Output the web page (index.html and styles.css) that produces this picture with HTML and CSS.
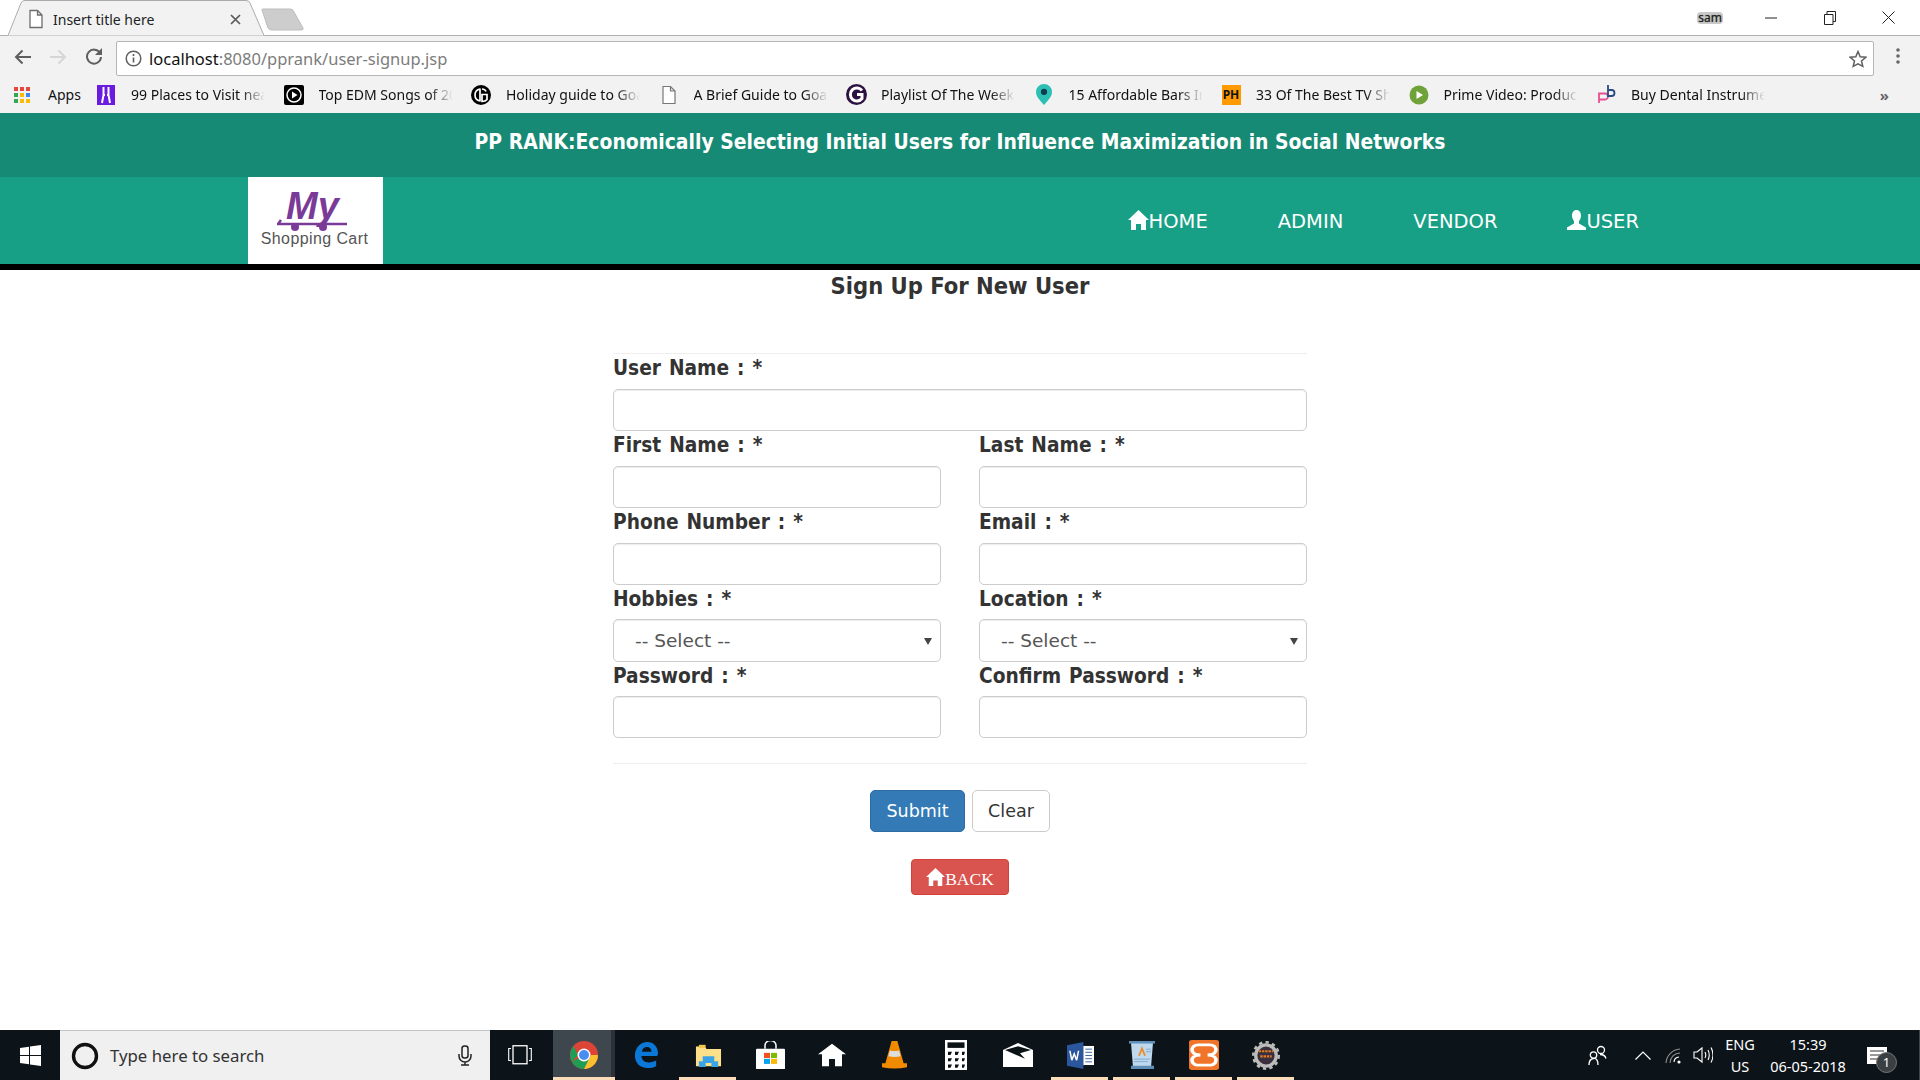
FILE: index.html
```html
<!DOCTYPE html>
<html lang="en">
<head>
<meta charset="utf-8">
<title>Insert title here</title>
<link rel="stylesheet" href="styles.css">
</head>
<body>
<div class="tabstrip">
  <svg class="tabshape" width="320" height="36" viewBox="0 0 320 36"><path d="M8 35.5 L21 3 Q22 .5 25 .5 L246 .5 Q249 .5 250 3 L264 35.5" fill="#f2f2f2" stroke="#ababab"/><path d="M262 10 Q261 9 264 9 L290 9 Q293 9 294 12 L303 28 Q304 30 301 30 L272 30 Q269 30 268 28 Z" fill="#cdcdcd" stroke="#bdbdbd"/></svg>
  <div class="tab">
    <svg width="16" height="20" viewBox="0 0 16 20"><path d="M2 1.5h7.5l4.5 4.5v12.5h-12z M9.500 1.500v4.500h4.500" fill="#fff" stroke="#6e6e6e" stroke-width="1.300"/></svg>
    <span class="tab-title">Insert title here</span>
    <svg class="tab-close" width="11" height="11" viewBox="0 0 11 11"><path d="M1 1l9 9M10 1l-9 9" stroke="#5a5a5a" stroke-width="1.700"/></svg>
  </div>
  <div class="winctl">
    <span class="profile">sam</span>
    <svg class="w-min" width="12" height="2" viewBox="0 0 12 2"><path d="M0 1h12" stroke="#222" stroke-width="1"/></svg>
    <svg class="w-res" width="12" height="14" viewBox="0 0 12 14"><path d="M.5 3.500h8.500v10h-8.500zM3 3.500v-3h8.500v10h-2.500" fill="none" stroke="#222"/></svg>
    <svg class="w-cls" width="13" height="13" viewBox="0 0 13 13"><path d="M.5.500l12 12M12.500.500l-12 12" stroke="#222"/></svg>
  </div>
</div>
<div class="toolbar">
  <svg class="t-back" width="18" height="16" viewBox="0 0 18 16"><path d="M17 8H2M8.500 1.500L2 8l6.500 6.500" fill="none" stroke="#5f5f5f" stroke-width="2"/></svg>
  <svg class="t-fwd" width="18" height="16" viewBox="0 0 18 16"><path d="M1 8h15M9.500 1.500L16 8l-6.500 6.500" fill="none" stroke="#d6d6d6" stroke-width="2"/></svg>
  <svg class="t-rel" width="18" height="18" viewBox="0 0 18 18"><path d="M15 6A7 7 0 1 0 16 10" fill="none" stroke="#5f5f5f" stroke-width="2"/><path d="M17 1v7h-7z" fill="#5f5f5f"/></svg>
  <div class="omnibox">
    <svg width="17" height="17" viewBox="0 0 17 17"><circle cx="8.500" cy="8.500" r="7.300" fill="none" stroke="#5f5f5f" stroke-width="1.500"/><path d="M8.500 7.500v5M8.500 4v2" stroke="#5f5f5f" stroke-width="1.600"/></svg>
    <span class="url"><span class="url-host">localhost</span>:8080/pprank/user-signup.jsp</span>
    <svg class="star" width="18" height="18" viewBox="0 0 18 18"><path d="M9 1.500l2.200 5.200 5.600.5-4.300 3.700 1.300 5.500L9 13.900l-4.800 2.500 1.300-5.500L1.200 7.200l5.600-.5z" fill="none" stroke="#5f5f5f" stroke-width="1.500"/></svg>
  </div>
  <svg class="t-menu" width="4" height="18" viewBox="0 0 4 18"><circle cx="2" cy="3" r="1.800" fill="#666"/><circle cx="2" cy="9" r="1.800" fill="#666"/><circle cx="2" cy="15" r="1.800" fill="#666"/></svg>
</div>
<div class="bookmarks">
  <div class="bm bm-apps">
    <svg width="17" height="16" viewBox="0 0 17 16"><g><rect width="4" height="4" fill="#e8453c"/><rect x="6" width="4" height="4" fill="#e8453c"/><rect x="12" width="4" height="4" fill="#e8453c"/><rect y="6" width="4" height="4" fill="#34a853"/><rect x="6" y="6" width="4" height="4" fill="#fbbc05"/><rect x="12" y="6" width="4" height="4" fill="#4285f4"/><rect y="12" width="4" height="4" fill="#34a853"/><rect x="6" y="12" width="4" height="4" fill="#fbbc05"/><rect x="12" y="12" width="4" height="4" fill="#fbbc05"/></g></svg>
    <span class="bm-apps-text">Apps</span>
  </div>
  <div class="bm">
    <span class="bm-ico"><svg width="18" height="20" viewBox="0 0 18 20"><rect width="18" height="20" fill="#6a1be0"/><path d="M6.500 2v8l-1.500 8M11.500 2v8l1.500 8M6.500 10h1.500M10 10h1.500" stroke="#fff" stroke-width="2" fill="none"/></svg></span>
    <span class="bm-text">99 Places to Visit near</span>
  </div>
  <div class="bm">
    <span class="bm-ico"><svg width="20" height="20" viewBox="0 0 20 20"><rect width="20" height="20" rx="2" fill="#000"/><circle cx="10" cy="10" r="7" fill="none" stroke="#fff" stroke-width="1.500"/><path d="M8 6.500v7l5.500-3.500z" fill="#fff"/></svg></span>
    <span class="bm-text">Top EDM Songs of 2018</span>
  </div>
  <div class="bm">
    <span class="bm-ico"><svg width="20" height="20" viewBox="0 0 20 20"><circle cx="10" cy="10" r="10" fill="#000"/><path d="M9 3.500v13M9 4Q4 5 4 10t5 6M11 4q3 0 4 2.500M11 9.500h5v5q-1.500 2-5 2z" fill="none" stroke="#fff" stroke-width="1.700"/></svg></span>
    <span class="bm-text">Holiday guide to Goa</span>
  </div>
  <div class="bm">
    <span class="bm-ico"><svg width="14" height="20" viewBox="0 0 14 20"><path d="M1 1.500h7.500l4.500 4.500v12.500h-12z M8.500 1.500v4.500h4.500" fill="#fff" stroke="#777" stroke-width="1.200"/></svg></span>
    <span class="bm-text">A Brief Guide to Goa</span>
  </div>
  <div class="bm">
    <span class="bm-ico"><svg width="21" height="21" viewBox="0 0 21 21"><circle cx="10.500" cy="10.500" r="10.500" fill="#2d1140"/><path d="M16 6.500A6.500 6.500 0 1 0 16 14.500V10.500H11" fill="none" stroke="#fff" stroke-width="3"/></svg></span>
    <span class="bm-text">Playlist Of The Week</span>
  </div>
  <div class="bm">
    <span class="bm-ico"><svg width="16" height="21" viewBox="0 0 18 24" preserveAspectRatio="none"><path d="M9 24C4 18 0 14 0 9a9 9 0 0 1 18 0c0 5-4 9-9 15z" fill="#2cbfb4"/><circle cx="9" cy="9" r="3.500" fill="#0d3f4f"/></svg></span>
    <span class="bm-text">15 Affordable Bars In</span>
  </div>
  <div class="bm">
    <span class="bm-ico"><span class="ph">PH</span></span>
    <span class="bm-text">33 Of The Best TV Shows</span>
  </div>
  <div class="bm">
    <span class="bm-ico"><svg width="20" height="20" viewBox="0 0 20 20"><circle cx="10" cy="10" r="9.500" fill="#6fa339"/><path d="M7.500 6v8l6.500-4z" fill="#fff"/></svg></span>
    <span class="bm-text">Prime Video: Products</span>
  </div>
  <div class="bm">
    <span class="bm-ico"><svg width="19" height="22" viewBox="0 0 19 22"><path d="M2 19V9.500h6a3 3 0 0 1 0 6H2" fill="none" stroke="#e84f92" stroke-width="1.800"/><path d="M11 1v11h3.500a2.800 2.800 0 0 0 0-6H11" fill="none" stroke="#274b82" stroke-width="1.800"/></svg></span>
    <span class="bm-text">Buy Dental Instruments</span>
  </div>
  <span class="bm-more">»</span>
</div>

<header class="site-title">PP RANK:Economically Selecting Initial Users for Influence Maximization in Social Networks</header>
<nav class="navbar">
  <div class="logo">
    <span class="logo-my">My</span>
    <svg class="logo-cart" width="72" height="14" viewBox="0 0 72 14"><path d="M4 1 L1 5 H70" fill="none" stroke="#7a3a98" stroke-width="2.500"/><circle cx="18" cy="8" r="4" fill="#7a3a98"/><circle cx="46" cy="8" r="4" fill="#7a3a98"/></svg>
    <span class="logo-name">Shopping Cart</span>
  </div>
  <ul class="nav-links">
    <li><svg class="ico-home" width="21" height="20" viewBox="0 0 21 20"><path d="M10.500 0L21 10h-3v10h-5v-6H8v6H3V10H0z" fill="#fff"/></svg>HOME</li>
    <li>ADMIN</li>
    <li>VENDOR</li>
    <li><svg class="ico-user" width="19" height="20" viewBox="0 0 19 20"><path d="M9.500 0c3 0 4.500 2.500 4.500 5.500 0 2.500-1 4.500-2 5.500v2.500l7 4V20H0v-2.500l7-4V11C6 10 5 8 5 5.500 5 2.500 6.500 0 9.500 0z" fill="#fff"/></svg>USER</li>
  </ul>
</nav>

<main class="page">
  <h1 class="page-title">Sign Up For New User</h1>
  <form class="signup">
    <div class="rule rule-top"></div>
    <div class="grid">
      <div class="field wide"><label>User Name : *</label><input type="text"></div>
      <div class="field"><label>First Name : *</label><input type="text"></div>
      <div class="field"><label>Last Name : *</label><input type="text"></div>
      <div class="field"><label>Phone Number : *</label><input type="text"></div>
      <div class="field"><label>Email : *</label><input type="text"></div>
      <div class="field"><label>Hobbies : *</label><div class="select"><select><option>-- Select --</option></select></div></div>
      <div class="field"><label>Location : *</label><div class="select"><select><option>-- Select --</option></select></div></div>
      <div class="field"><label>Password : *</label><input type="password"></div>
      <div class="field"><label>Confirm Password : *</label><input type="password"></div>
    </div>
    <div class="rule rule-bottom"></div>
    <div class="actions">
      <button type="button" class="btn btn-primary">Submit</button>
      <button type="button" class="btn btn-default">Clear</button>
    </div>
    <div class="back-row">
      <a class="btn-back"><svg width="19" height="18" viewBox="0 0 21 20"><path d="M10.500 0L21 10h-3v10h-5v-6H8v6H3V10H0z" fill="#fff"/></svg>BACK</a>
    </div>
  </form>
</main>

<footer class="taskbar">
  <div class="start"><svg width="21" height="21" viewBox="0 0 21 21"><path d="M0 3l9-1.300V10H0zM10 1.500L21 0v10H10zM0 11h9v8.300L0 18zM10 11h11v10l-11-1.500z" fill="#fff"/></svg></div>
  <div class="search">
    <svg width="28" height="28" viewBox="0 0 28 28"><circle cx="14" cy="14" r="11.500" fill="none" stroke="#111" stroke-width="3.400"/></svg>
    <span class="search-text">Type here to search</span>
    <svg class="mic" width="16" height="21" viewBox="0 0 16 21"><rect x="5" y="1" width="6" height="12" rx="2.500" fill="none" stroke="#222" stroke-width="1.500"/><path d="M2 9v2a6 6 0 0 0 12 0V9M8 17v3M4 20h8" fill="none" stroke="#222" stroke-width="1.500"/></svg>
  </div>
  <div class="slot slot-view"><svg width="24" height="20" viewBox="0 0 24 20"><rect x="5" y=".75" width="14" height="18" fill="none" stroke="#fff" stroke-width="1.300"/><path d="M3 3.500H.7v12H3M21 3.500h2.300v12H21" fill="none" stroke="#fff" stroke-width="1.100"/></svg></div>
  <div class="slot slot-chrome"><svg width="28" height="28" viewBox="0 0 28 28"><circle cx="14" cy="14" r="14" fill="#dc4437"/><path d="M14 14L1.900 21A14 14 0 0 0 14 28l7-10z" fill="#1f9d55"/><path d="M14 14h14a14 14 0 0 1-14 14l7-14z" fill="#fbc02d"/><path d="M2 21A14 14 0 0 1 3.500 5L8 14z" fill="#1f9d55"/><circle cx="14" cy="14" r="6.500" fill="#fff"/><circle cx="14" cy="14" r="5" fill="#4a8df0"/></svg></div>
  <div class="slot"><svg width="24" height="26" viewBox="0 0 26 28" preserveAspectRatio="none"><path d="M25 15H8c.3 4 3.300 7 8 7 3 0 6-.8 8-2v6c-2.500 1.300-5.500 2-9 2C6 28 1 22 1 14.500 1 6.500 6.800 0 14.500 0 21 0 26 5 26 12.500c0 1-.3 1.800-1 2.500zM8.500 10.500H19C19 7.500 17 5.500 14 5.500s-5 2-5.500 5z" fill="#0b78d7"/></svg></div>
  <div class="slot on"><svg width="27" height="23" viewBox="0 0 28 28" preserveAspectRatio="none"><path d="M1 3h9l2 3h15v21H1z" fill="#ffe08a"/><path d="M4 1h7v4H4z" fill="#f2c94c"/><path d="M8 15h12v6h4v7h-7v-5h-6v5H4v-7h4z" fill="#3ba4e6"/></svg></div>
  <div class="slot"><svg width="29" height="28" viewBox="0 0 29 33" preserveAspectRatio="none"><path d="M9 9V5a5.500 5.500 0 0 1 11 0v4" fill="none" stroke="#fff" stroke-width="1.500"/><rect y="9" width="29" height="24" rx="1" fill="#fff"/><rect x="8" y="14" width="6" height="6" fill="#f25022"/><rect x="15" y="14" width="6" height="6" fill="#7fba00"/><rect x="8" y="21" width="6" height="6" fill="#00a4ef"/><rect x="15" y="21" width="6" height="6" fill="#ffb900"/></svg></div>
  <div class="slot"><svg width="28" height="24" viewBox="0 0 28 30" preserveAspectRatio="none"><path d="M14 1L28 14h-4v15h-7v-9h-6v9H4V14H0z" fill="#fff"/></svg></div>
  <div class="slot"><svg width="25" height="28" viewBox="0 0 26 34" preserveAspectRatio="none"><path d="M10 0h6l6.500 27H26v5q-13 3-26 0v-5h3.500z" fill="#f28a00"/><path d="M8.200 11.500q5 1.500 9.600 0l1.500 7q-6 2-12.600 0z" fill="#ddd"/></svg></div>
  <div class="slot"><svg width="22" height="30" viewBox="0 0 22 38" preserveAspectRatio="none"><rect width="22" height="38" fill="#fff"/><rect x="2.500" y="3" width="17" height="7" fill="#0b1216"/><g fill="#0b1216"><path d="M3 15h4l-1.500 4H3zM10 15h4l-1.500 4H10zM17 15h3l-1 4h-2zM3 23h4l-1.500 4H3zM10 23h4l-1.500 4H10zM17 23h3l-1 4h-2zM3 31h4l-1.500 4H3zM10 31h4l-1.500 4H10zM17 31h3l-1 4h-2z"/></g></svg></div>
  <div class="slot"><svg width="30" height="24" viewBox="0 0 30 29" preserveAspectRatio="none"><path d="M15 0L30 8.500V29H0V8.500z" fill="#fff"/><path d="M2 8.500L15 4l13 4.500-11 4 5 6.500L2 8.500z" fill="#0b1216"/></svg></div>
  <div class="slot on"><svg width="27" height="27" viewBox="0 0 28 34" preserveAspectRatio="none"><path d="M0 4L17 0v34L0 30z" fill="#2a569d"/><rect x="17" y="5" width="11" height="24" fill="#fff"/><path d="M19 9h7M19 13h7M19 17h7M19 21h7M19 25h7" stroke="#2a569d"/><path d="M3 11l2 12 2.500-8 2.500 8 2-12" fill="none" stroke="#fff" stroke-width="1.600"/></svg></div>
  <div class="slot on"><svg width="26" height="28" viewBox="0 0 26 34" preserveAspectRatio="none"><path d="M2 2h22l-2 30H4z" fill="#bed8ee"/><path d="M0 0h26v3H0zM2 30h23v4H2z" fill="#5f8fb8"/><path d="M10 18l3-9 3 9" fill="none" stroke="#f08a24" stroke-width="1.800"/><path d="M17 10h5M17 13h5M5 22h16M5 25h14" stroke="#7ea8d0"/></svg></div>
  <div class="slot on"><svg width="30" height="30" viewBox="0 0 30 37" preserveAspectRatio="none"><rect width="30" height="37" rx="3" fill="#f0752a"/><path d="M9 6h12a5 5 0 0 1 0 12l-2 .5 2 .5a5.500 5.500 0 0 1 0 12H9a5.500 5.500 0 0 1 0-12l2-.5-2-.5a5 5 0 0 1 0-12z" fill="none" stroke="#fff" stroke-width="3.600"/></svg></div>
  <div class="slot on"><svg width="28" height="29" viewBox="0 0 34 34" preserveAspectRatio="none"><circle cx="17" cy="17" r="12.500" fill="#3a2f3f" stroke="#bcbcbc" stroke-width="4"/><circle cx="17" cy="17" r="15.500" fill="none" stroke="#bcbcbc" stroke-width="3" stroke-dasharray="4 4"/><path d="M8 12h18M10 18h14" stroke="#e07b20" stroke-width="2.500" stroke-dasharray="3 1"/></svg></div>
  <div class="tray">
    <svg class="tr-people" width="19" height="21" viewBox="0 0 19 21"><circle cx="13" cy="5" r="3.500" fill="none" stroke="#fff" stroke-width="1.300"/><circle cx="5.500" cy="10" r="3.200" fill="none" stroke="#fff" stroke-width="1.300"/><path d="M1 20q0-6 4.500-6.500T10 20M12 9.500q5 0 6 4" fill="none" stroke="#fff" stroke-width="1.300"/></svg>
    <svg class="tr-chev" width="16" height="9" viewBox="0 0 16 9"><path d="M.5 8.500L8 1l7.500 7.500" fill="none" stroke="#fff" stroke-width="1.200"/></svg>
    <svg class="tr-wifi" width="17" height="17" viewBox="0 0 17 17"><path d="M1 16A15 15 0 0 1 15 2M5 16A10 10 0 0 1 15 6" fill="none" stroke="#8d8d8d" stroke-width="1.100"/><path d="M9 15A5.500 5.500 0 0 1 14 10" fill="none" stroke="#fff" stroke-width="1.200"/><circle cx="14" cy="15" r="1.600" fill="#fff"/></svg>
    <svg class="tr-vol" width="20" height="18" viewBox="0 0 20 18"><path d="M1 6h3l5-4v14l-5-4H1z M12 6q1.500 3 0 6M15 4q2.500 5 0 10M18 1.500q4 7.500 0 15" fill="none" stroke="#fff" stroke-width="1.100"/></svg>
    <div class="lang"><span>ENG</span><span>US</span></div>
    <div class="clock"><span>15:39</span><span>06-05-2018</span></div>
    <div class="notif">
      <svg width="20" height="17" viewBox="0 0 20 17"><rect width="20" height="17" fill="#fff"/><path d="M3 4h14M3 8h14M3 12h14" stroke="#333" stroke-width="1.100"/></svg>
      <span class="notif-badge">1</span>
    </div>
  </div>
</footer>
</body>
</html>
```

FILE: styles.css
```css
* { box-sizing: border-box; }
html, body { margin: 0; height: 100%; }
body {
  width: 1920px; height: 1080px; overflow: hidden;
  display: flex; flex-direction: column;
  background: #fff; color: #333;
  font-family: "DejaVu Sans", sans-serif;
}
svg { flex: none; display: block; }

/* browser chrome */
.tabstrip {
  position: relative; height: 36px; flex: none; background: #fff;
  border-bottom: 1px solid #b0b0b0; display: flex; align-items: flex-start;
  font-family: "Noto Sans", sans-serif;
}
.tabshape { position: absolute; left: 0; top: 0; }
.tab { position: relative; width: 250px; padding: 9px 0 0 28px; display: flex; align-items: center; align-self: flex-start; height: 29px; }
.tab-title { margin-left: 9px; font-size: 14px; color: #222; white-space: nowrap; }
.tab-close { margin-left: 76px; }
.winctl { margin-left: auto; display: flex; align-items: center; height: 35px; padding-right: 25px; }
.profile { font-size: 12px; color: #222; background: #c9c9c9; border-radius: 4px; padding: 0 1px; line-height: 12px; margin-right: 42px; text-shadow: 0 0 1px #555; }
.w-min { margin-right: 47px; }
.w-res { margin-right: 46px; }

.toolbar { height: 40px; flex: none; background: #f2f2f2; display: flex; align-items: center; padding: 0 20px 0 14px; font-family: "Noto Sans", sans-serif; }
.t-back { margin-right: 17px; margin-top: 2px; }
.t-fwd { margin-right: 18px; margin-top: 2px; }
.t-rel { margin-right: 13px; }
.omnibox { width: 1759px; height: 35px; margin-top: 5px; background: #fff; border: 1px solid #b5b5b5; border-radius: 2px; display: flex; align-items: center; padding: 0 6px 0 8px; }
.url { margin-left: 7px; font-size: 16.5px; color: #7c7c7c; white-space: nowrap; }
.url-host { color: #111; }
.star { margin-left: auto; }
.t-menu { margin-left: 22px; }

.bookmarks { height: 37px; flex: none; background: #f2f2f2; display: flex; align-items: center; padding-left: 14px; font-family: "Noto Sans", sans-serif; font-size: 14px; color: #111; }
.bm { display: flex; align-items: center; width: 187.500px; flex: none; }
.bm-apps { width: 82px; }
.bm-apps-text { margin-left: 17px; }
.bm-ico { width: 20px; flex: none; display: flex; justify-content: center; }
.bm-text { margin-left: 15px; width: 134px; overflow: hidden; white-space: nowrap; -webkit-mask-image: linear-gradient(90deg, #000 82%, transparent 100%); mask-image: linear-gradient(90deg, #000 82%, transparent 100%); }
.ph { width: 19px; height: 20px; background: #ff9a00; color: #111; font-size: 12px; font-weight: 700; line-height: 20px; text-align: center; flex: none; }
.bm-more { margin-left: auto; padding-right: 31px; font-size: 15px; font-weight: 700; color: #666; }

/* site header */
.site-title { height: 64px; flex: none; background: #168a74; color: #fff; text-align: center; font-family: "DejaVu Sans Condensed", "DejaVu Sans", sans-serif; font-weight: 700; font-size: 20.900px; line-height: 58px; white-space: nowrap; }
.navbar { height: 93px; flex: none; background: #17a085; border-bottom: 6px solid #000; display: flex; justify-content: space-between; padding: 0 246px 0 248px; color: #fff; }
.logo { width: 135px; height: 87px; background: #fff; display: flex; flex-direction: column; align-items: center; padding-top: 12px; }
.logo-my { font-family: "Liberation Sans", sans-serif; font-style: italic; font-weight: 700; font-size: 38px; line-height: 34px; letter-spacing: 0; color: #7a3a98; margin-left: -6px; }
.logo-cart { margin: -4px 0 0 -5px; }
.logo-name { font-family: "Liberation Sans", sans-serif; font-size: 16px; line-height: 16px; color: #555; letter-spacing: .4px; margin: -2px 0 0 -2px; }
.nav-links { list-style: none; margin: 0; padding: 0; display: flex; align-items: center; font-size: 19.500px; }
.nav-links li { display: flex; align-items: center; padding: 2px 35px 0; }
.nav-links svg { margin-top: -3px; }

/* form */
.page { flex: 1; display: flex; flex-direction: column; align-items: center; min-height: 0; }
.page-title { margin: 0; font-family: "DejaVu Sans Condensed", "DejaVu Sans", sans-serif; font-size: 23.500px; font-weight: 700; line-height: 32px; color: #333; height: 83px; }
.signup { width: 694px; }
.rule { height: 1px; background: #eee; }
.grid { display: grid; grid-template-columns: 1fr 1fr; column-gap: 38px; }
.wide { grid-column: 1 / -1; }
.field { display: flex; flex-direction: column; height: 76.900px; }
.field label { font-family: "DejaVu Sans Condensed", "DejaVu Sans", sans-serif; font-weight: 700; font-size: 20.700px; word-spacing: 1.500px; line-height: 25px; height: 34.900px; padding-top: 2px; color: #333; }
.field input, .field select {
  width: 100%; height: 42px; background: #fff; border: 1px solid #ccc; border-radius: 5px;
  box-shadow: inset 0 1px 1px rgba(0,0,0,.075); padding: 0 21px; margin: 0;
  font-family: "DejaVu Sans", sans-serif; font-size: 18.500px; color: #555; outline: 0;
}
.select { position: relative; }
.select select { appearance: none; -webkit-appearance: none; height: 43px; }
.select::after { content: ""; position: absolute; right: 9px; top: 19px; border: 4px solid transparent; border-top: 7px solid #444; border-bottom: 0; }
.rule-bottom { margin-top: 25px; }
.actions { display: flex; justify-content: center; gap: 7px; margin-top: 26px; }
.btn { height: 42px; border-radius: 5px; font-family: "DejaVu Sans", sans-serif; font-size: 17.500px; padding: 0; cursor: pointer; }
.btn-primary { width: 95px; background: #337ab7; border: 1px solid #2e6da4; color: #fff; }
.btn-default { width: 78px; background: #fff; border: 1px solid #ccc; color: #333; }
.back-row { display: flex; justify-content: center; margin-top: 27px; }
.btn-back { width: 98px; height: 36px; background: #d9534f; border: 1px solid #d43f3a; border-radius: 4px; color: #fff; display: flex; align-items: center; justify-content: center; font-family: "Liberation Serif", serif; font-size: 17.500px; padding-top: 5px; }
.btn-back svg { margin-top: -6px; }

/* taskbar */
.taskbar { height: 50px; flex: none; background: #0d1419; display: flex; align-items: stretch; color: #fff; font-family: "Noto Sans", sans-serif; }
.start { width: 60px; display: flex; align-items: center; justify-content: center; }
.search { width: 430px; background: #f0f0f0; border-top: 1px solid #c4c4c4; display: flex; align-items: center; padding: 0 17px 0 11px; color: #333; font-size: 16.800px; }
.search-text { margin-left: 11px; }
.mic { margin-left: auto; }
.slot { width: 62px; display: flex; align-items: center; justify-content: center; border-bottom: 3px solid transparent; padding-top: 3px; }
.slot.on { border-bottom-color: #fbdcb8; border-image: linear-gradient(90deg, transparent 5px, #fbdcb8 5px, #fbdcb8 calc(100% - 6px), transparent calc(100% - 6px)) 3; }
.slot-view { width: 63px; padding-right: 3px; }
.slot-chrome { background: #3e474d; border-bottom-color: #fbdcb8; box-shadow: inset -4px 0 0 #2b3136; }
.tray { margin-left: auto; display: flex; align-items: center; padding-right: 26px; border-right: 1px solid #444; font-size: 14.500px; }
.tr-people { margin-right: 28px; }
.tr-chev { margin-right: 14px; }
.tr-wifi { margin-right: 11px; }
.tr-vol { margin-right: 13px; }
.lang { width: 28px; display: flex; flex-direction: column; align-items: center; line-height: 22px; }
.clock { width: 76px; margin-left: 16px; display: flex; flex-direction: column; align-items: center; line-height: 22px; white-space: nowrap; }
.notif { position: relative; margin-left: 21px; margin-right: 6px; }
.notif-badge { position: absolute; left: 9px; top: 5px; width: 21px; height: 21px; border-radius: 50%; background: #3a3f43; border: 1px solid #777; color: #fff; font-size: 13px; line-height: 19px; text-align: center; }
```
